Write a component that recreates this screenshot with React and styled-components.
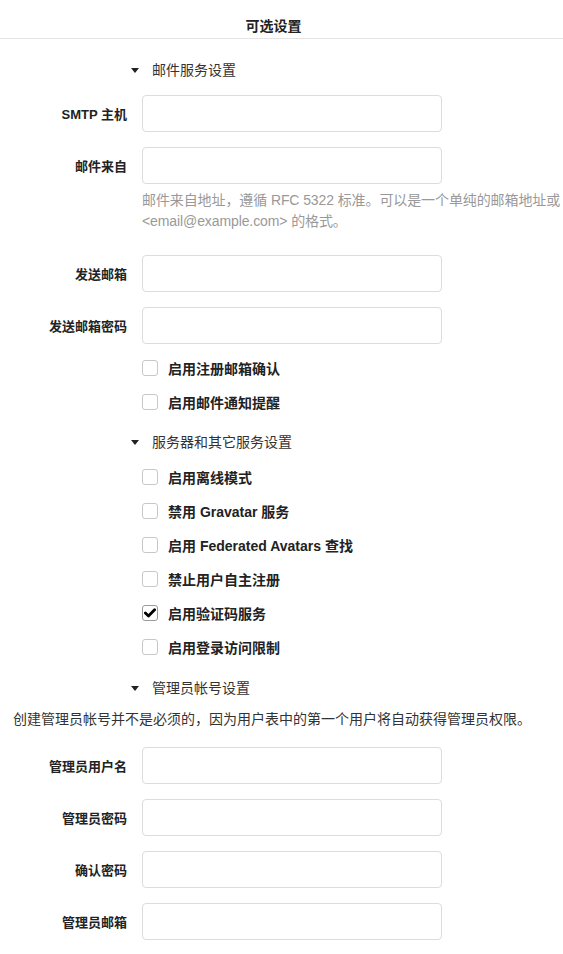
import React from 'react';
import styled, { createGlobalStyle } from 'styled-components';

const GlobalStyle = createGlobalStyle`
  body {
    margin: 0;
    background: #fff;
    color: #333;
    font-family: 'Liberation Sans', 'Noto Sans CJK SC', sans-serif;
    font-size: 14px;
  }
`;

const Page = styled.div`
  width: 563px;
  padding-bottom: 20px;
`;

const Header = styled.div`
  padding: 16px 16px 2px 0;
  border-bottom: 1px solid #e3e3e3;
  text-align: center;
  font-size: 14px;
  font-weight: bold;
  line-height: 20px;
  color: #222;
`;

const Summary = styled.div`
  display: flex;
  align-items: center;
  gap: 13px;
  margin-top: ${(p) => p.$top}px;
  padding-left: 131px;
  font-size: 14px;
  line-height: 20px;
  color: #333;

  &::before {
    content: '';
    width: 0;
    height: 0;
    border-left: 4px solid transparent;
    border-right: 4px solid transparent;
    border-top: 5px solid #222;
  }
`;

const Fields = styled.div`
  display: flex;
  flex-direction: column;
  gap: ${(p) => p.$gap}px;
  margin-top: ${(p) => p.$top}px;
`;

const Row = styled.div`
  display: grid;
  grid-template-columns: 127px 1fr;
  column-gap: 15px;
  align-items: center;
`;

const Label = styled.label`
  text-align: right;
  font-size: 13px;
  font-weight: bold;
  color: #222;
`;

const Input = styled.input`
  box-sizing: border-box;
  width: 300px;
  height: 37px;
  border: 1px solid #dcdcdc;
  border-radius: 4px;
  background: #fff;
  outline: none;
`;

const Help = styled.div`
  grid-column: 2;
  margin-top: 6px;
  font-size: 14px;
  line-height: 21px;
  color: #999;
  white-space: nowrap;
  letter-spacing: -0.1px;
`;

const CheckRow = styled.label`
  display: flex;
  align-items: center;
  gap: 10px;
  margin-left: 142px;
  height: 20px;
  font-size: 14px;
  font-weight: bold;
  color: #222;
`;

const Box = styled.span`
  box-sizing: border-box;
  display: flex;
  align-items: center;
  justify-content: center;
  width: 16px;
  height: 16px;
  border: 1px solid ${(p) => (p.$checked ? '#9a9a9a' : '#c8c8c8')};
  border-radius: 3px;
  background: #fff;
`;

const Note = styled.p`
  margin: 11px 0 0 13px;
  font-size: 14px;
  line-height: 20px;
  color: #333;
`;

const Check = ({ label, checked }) => (
  <CheckRow>
    <Box $checked={checked}>
      {checked && (
        <svg width="12" height="12" viewBox="0 0 12 12">
          <path d="M1.4 6 L4.5 9 L10.6 2.8" fill="none" stroke="#000" strokeWidth="2.8" strokeLinecap="round" strokeLinejoin="round" />
        </svg>
      )}
    </Box>
    {label}
  </CheckRow>
);

const Field = ({ label, help }) => (
  <Row>
    <Label>{label}</Label>
    <Input type="text" />
    {help}
  </Row>
);

export default function App() {
  return (
    <Page>
      <GlobalStyle />
      <Header>可选设置</Header>

      <Summary $top={21}>邮件服务设置</Summary>
      <Fields $gap={15} $top={15}>
        <Field label="SMTP 主机" />
        <Field
          label="邮件来自"
          help={
            <Help>
              邮件来自地址，遵循 RFC 5322 标准。可以是一个单纯的邮箱地址或
              <br />
              &lt;email@example.com&gt; 的格式。
            </Help>
          }
        />
      </Fields>
      <Fields $gap={15} $top={23}>
        <Field label="发送邮箱" />
        <Field label="发送邮箱密码" />
      </Fields>
      <Fields $gap={14} $top={14}>
        <Check label="启用注册邮箱确认" />
        <Check label="启用邮件通知提醒" />
      </Fields>

      <Summary $top={20}>服务器和其它服务设置</Summary>
      <Fields $gap={14} $top={15}>
        <Check label="启用离线模式" />
        <Check label="禁用 Gravatar 服务" />
        <Check label="启用 Federated Avatars 查找" />
        <Check label="禁止用户自主注册" />
        <Check label="启用验证码服务" checked />
        <Check label="启用登录访问限制" />
      </Fields>

      <Summary $top={21}>管理员帐号设置</Summary>
      <Note>创建管理员帐号并不是必须的，因为用户表中的第一个用户将自动获得管理员权限。</Note>
      <Fields $gap={15} $top={18}>
        <Field label="管理员用户名" />
        <Field label="管理员密码" />
        <Field label="确认密码" />
        <Field label="管理员邮箱" />
      </Fields>
    </Page>
  );
}
